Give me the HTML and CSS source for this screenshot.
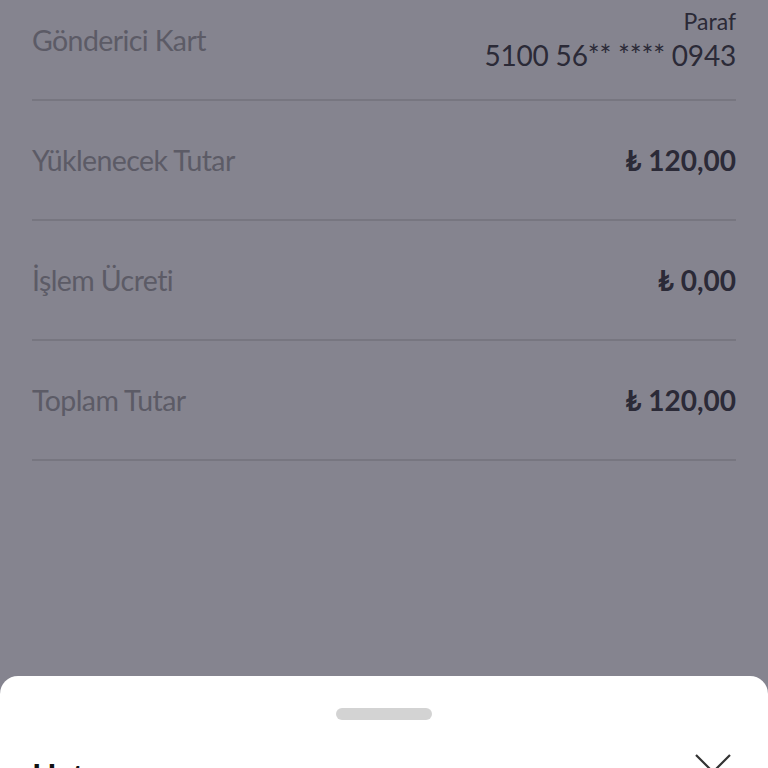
FILE: index.html
```html
<!DOCTYPE html>
<html lang="tr">
	<head>
		<meta charset="utf-8" />
		<title>Para Yükle</title>
		<meta name="viewport" content="width=device-width, initial-scale=1.0" />
		<link rel="stylesheet" href="styles.css">
	</head>

	<body>
		<div class="screen">
			<div class="details">
				<div class="row">
					<span class="label">Gönderici Kart</span>
					<div class="card">
						<span class="card-name">Paraf</span>
						<span class="card-no">5100 56** **** 0943</span>
					</div>
				</div>
				<div class="row">
					<span class="label">Yüklenecek Tutar</span>
					<span class="amount">₺ 120,00</span>
				</div>
				<div class="row">
					<span class="label">İşlem Ücreti</span>
					<span class="amount">₺ 0,00</span>
				</div>
				<div class="row">
					<span class="label">Toplam Tutar</span>
					<span class="amount">₺ 120,00</span>
				</div>
			</div>

			<!-- dim layer behind the sheet -->
			<div class="overlay"></div>

			<div class="sheet">
				<div class="handle"></div>
				<div class="sheet-head">
					<h2 class="sheet-title">Hata</h2>
					<button class="close" aria-label="Kapat">
						<svg width="36" height="36" viewBox="0 0 36 36">
							<path d="M1 1 L35 35 M35 1 L1 35" stroke="#333" stroke-width="2.2" fill="none" />
						</svg>
					</button>
				</div>
			</div>
		</div>
	</body>
</html>
```

FILE: styles.css
```css
html, body {
  margin: 0;
  padding: 0;
  background: #fff;
}
.screen {
  position: relative;
  width: 768px;
  height: 768px;
  overflow: hidden;
  font-family: Lato, "Open Sans", sans-serif;
}
.details {
  padding: 0 32px;
  margin-top: -19px;
}
.row {
  height: 118px;
  display: flex;
  align-items: center;
  justify-content: space-between;
  border-bottom: 2px solid #e2e2e0;
}
.label {
  font-size: 28.5px;
  letter-spacing: -0.6px;
  color: #adadad;
}
.card {
  display: flex;
  flex-direction: column;
  align-items: flex-end;
  padding-top: 2px;
}
.card-name {
  font-size: 23px;
  color: #4a4a4e;
  line-height: 28px;
}
.card-no {
  font-size: 28px;
  letter-spacing: -0.2px;
  color: #4a4a4e;
  line-height: 40px;
}
.amount {
  font-size: 28px;
  font-weight: bold;
  color: #4a4a4e;
}
.overlay {
  position: absolute;
  top: 0;
  left: 0;
  right: 0;
  bottom: 0;
  background: rgba(11, 9, 31, 0.5);
}
.sheet {
  position: absolute;
  top: 676px;
  left: 0;
  right: 0;
  bottom: -200px;
  background: #fff;
  border-radius: 18px 18px 0 0;
}
.handle {
  width: 96px;
  height: 12px;
  margin: 32px auto 0;
  border-radius: 6px;
  background: #d3d3d3;
}
.sheet-head {
  display: flex;
  justify-content: space-between;
  align-items: flex-start;
  padding: 0 37px 0 32px;
  margin-top: 36px;
}
.sheet-title {
  margin: 0;
  font-size: 32px;
  font-weight: bold;
  color: #111;
}
.close {
  border: 0;
  background: none;
  padding: 0;
  margin-top: -2px;
  width: 36px;
  height: 36px;
}
```
